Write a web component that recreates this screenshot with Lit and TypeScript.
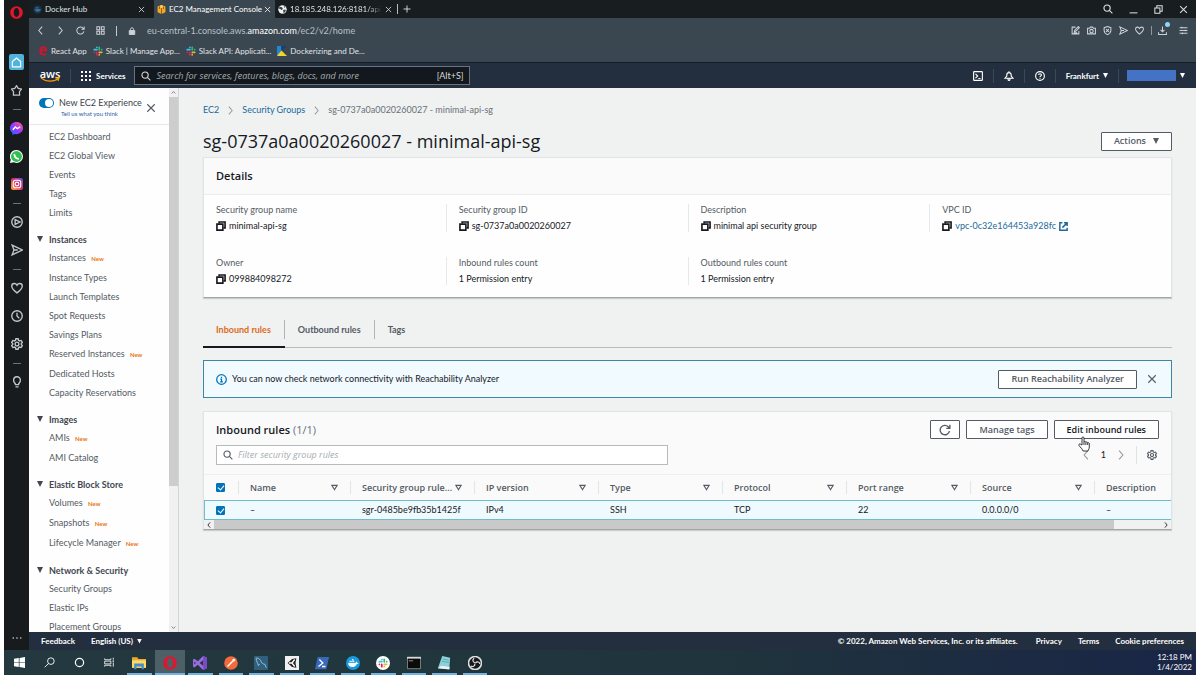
import { LitElement, html, svg, css, nothing } from "lit";
import { customElement, state } from "lit/decorators.js";

const icon = (size: number, body: unknown, cls = "") =>
  html`<svg class="ic ${cls}" width=${size} height=${size} viewBox="0 0 16 16" aria-hidden="true">${body}</svg>`;

/* Line icons, drawn on a 16 unit grid */
const I = {
  close: svg`<path d="M2 2l12 12M14 2L2 14"/>`,
  plus: svg`<path d="M8 1v14M1 8h14"/>`,
  back: svg`<path d="M11 1L5 8l6 7"/>`,
  forward: svg`<path d="M5 1l6 7-6 7"/>`,
  reload: svg`<path d="M14 9.500A6.300 6.300 0 1 1 12.300 3.600L14 5.400M14.500 1v4.800H9.700"/>`,
  grid: svg`<path d="M1.500 1.500h5v5h-5zM9.500 1.500h5v5h-5zM1.500 9.500h5v5h-5zM9.500 9.500h5v5h-5z"/>`,
  lock: svg`<path class="fill" d="M2.500 7h11v8h-11z"/><path d="M5 7V4.500a3 3 0 0 1 6 0V7"/>`,
  search: svg`<circle cx="6.500" cy="6.500" r="5"/><path d="M10.200 10.200L15 15"/>`,
  minimize: svg`<path d="M1 14h14"/>`,
  restore: svg`<path d="M1.500 5.500h9v9h-9zM5 5.500v-4h9.500V11h-4"/>`,
  edit: svg`<path d="M8 2H2v12h12V9M6 10l1-3 6-6 2 2-6 6zM5 12h6"/>`,
  camera: svg`<path d="M1 4h3.500L6 2h4l1.500 2H15v10H1z"/><circle cx="8" cy="9" r="3"/>`,
  shield: svg`<path d="M8 1l6 2v5c0 4-3 6-6 7.500C5 14 2 12 2 8V3zM5.500 5.500l5 5M10.500 5.500l-5 5"/>`,
  send: svg`<path d="M1.500 1.500L15 8 1.500 14.500 4 8zM4 8h5"/>`,
  heart: svg`<path d="M8 14.500C3 10.500 1 8.500 1 5.500 1 3.300 2.600 2 4.400 2 6 2 7.300 2.900 8 4.300 8.700 2.900 10 2 11.600 2 13.400 2 15 3.300 15 5.500c0 3-2 5-7 9z"/>`,
  download: svg`<path d="M8 1v9M4.500 7L8 10.500 11.500 7M1 11v4h14v-4"/>`,
  menu: svg`<path d="M1 3h14M1 8h14M1 13h14M5 1.500v3M11 6.500v3M6 11.500v3"/>`,
  home: svg`<path d="M8 1.500L2 6.500V14.500h12V6.500z"/>`,
  star: svg`<path d="M8 1l2.500 4 4.700 1-2.900 3.800.2 5H3.500l.2-5L.8 6l4.700-1z"/>`,
  play: svg`<circle cx="8" cy="8" r="7"/><path d="M5.500 4.800L12 8l-6.500 3.200z"/>`,
  clock: svg`<circle cx="8" cy="8" r="7"/><path d="M8 3.500V8l3 3"/>`,
  cog: svg`<path d="M6.500 1h3l.5 2 1.600.9 2-.6 1.500 2.600L13.700 7.300v1.400l1.400 1.400-1.500 2.600-2-.6-1.600.9-.5 2h-3L6 13l-1.600-.9-2 .6L.9 10.100l1.400-1.400V7.300L.9 5.900l1.500-2.600 2 .6L6 3z"/><circle cx="8" cy="8" r="2.500"/>`,
  bulb: svg`<path d="M6 11.500C6 9.500 3.500 9 3.500 5.500a4.500 4.500 0 0 1 9 0C12.500 9 10 9.500 10 11.500zM6 14.500h4"/>`,
  shell: svg`<rect x="1" y="1" width="14" height="14" rx="1"/><path d="M4 4.500L7.500 8 4 11.500M8.500 12H12"/>`,
  bell: svg`<path d="M1.500 11.500h13L11.500 8V6a3.500 3.500 0 0 0-7 0v2zM8 2.500V.5M6.500 12v1.500a1.500 1.500 0 0 0 3 0V12"/>`,
  help: svg`<circle cx="8" cy="8" r="7"/><path d="M5.800 6.500C5.800 5 6.800 4.300 8 4.300s2.300.7 2.300 2S8 7.900 8 9.500M8 10.700v1.800"/>`,
  info: svg`<circle cx="8" cy="8" r="7"/><path d="M6.300 7.300H8v4.200M6 11.500h4M8 4v1.700"/>`,
  copy: svg`<path d="M1.500 5h9.500v9.500H1.500z"/><path d="M5 4V1.500h9.500V11H12"/>`,
  external: svg`<path d="M6 1.500H1.500v13h13V10M9 1.500h5.500V7M14 2L6 10"/>`,
};

const aps = {
  windows: svg`<path fill="#fff" d="M0 2.500l7-1v6H0zM8 1.300L16 0v7.500H8zM0 8.500h7v6l-7-1zM8 8.500h8V16l-8-1.300z"/>`,
  opera: svg`<path fill="#e0162d" fill-rule="evenodd" d="M8 .2a7.800 7.800 0 1 0 0 15.600A7.800 7.800 0 0 0 8 .2zM8 2.500c2 0 3.400 2.400 3.400 5.500S10 13.500 8 13.500 4.600 11.100 4.600 8 6 2.500 8 2.500z"/>`,
  ring: svg`<circle cx="8" cy="8" r="6" fill="none" stroke="#fff" stroke-width="1.800"/>`,
  find: svg`<g fill="none" stroke="#fff" stroke-width="1.300"><circle cx="10" cy="6" r="4.800"/><path d="M6.500 9.500L1 15"/></g>`,
  tasks: svg`<g fill="none" stroke="#fff" stroke-width="1.200"><path d="M1 2v2h9V2M1 14v-2h9v2M1 6h9v4H1zM13.500 1v3M13.500 8v6"/></g><path fill="#fff" d="M12.500 5h2v2h-2z"/>`,
  folder: svg`<path fill="#e9ab2d" d="M0 1.500h6l1.500 2H16v10H0z"/><path fill="#ffd968" d="M0 5h16v8.500H0z"/><path fill="#3e8fce" d="M2.500 8.500h11V15H11v-3H5v3H2.500z"/>`,
  vs: svg`<path fill="#9b6cdf" fill-rule="evenodd" d="M11.500 0L16 2v12l-4.500 2L5.500 10 1.500 13 0 12V4l1.500-1 4 3zM11.500 4.800L7.500 8l4 3.200zM1.500 6.300v3.400L3.400 8z"/><path fill="#7a4bc4" d="M11.500 0L16 2v12l-4.500 2z"/>`,
  postman: svg`<circle cx="8" cy="8" r="7.800" fill="#f26b3a"/><path stroke="#fff" stroke-width="1.600" d="M4 12l6.500-6.500"/><circle cx="11.300" cy="4.600" r="1.600" fill="#fff"/>`,
  mysql: svg`<rect width="16" height="16" rx="1" fill="#2f617f"/><path d="M2 2.500c3-.5 5 1 6.500 4.500 1 2 2 2 4 2.500l1.500 4M2.500 3c0 3 2 5 2.500 8l1.500-2" fill="none" stroke="#b4d2e4" stroke-width=".9"/>`,
  unity: svg`<rect width="16" height="16" fill="#f1f1f1"/><path fill="#242424" d="M3 8l5-4.500 5-1-1 5.500 1 5.500-5-1z"/><path d="M8 8H4.500M8 8l3-4M8 8l3 4" stroke="#fff" stroke-width="1.500"/>`,
  ps: svg`<path fill="#3969b9" d="M3 1h13l-3 14H0z"/><path d="M5 4l4 4-5 4M8 12h4" fill="none" stroke="#fff" stroke-width="1.500"/>`,
  docker: svg`<circle cx="8" cy="8" r="8" fill="#169ce0"/><path fill="#fff" d="M2.500 8h8.300l1-2 .9 1.700 1.600.2c-.5 1-1.300 1.200-2 1.300-1 2.500-2.800 3.500-5 3.500-3 0-4.700-1.700-4.800-4.700zM4 5.500h1.500V7H4zM6 5.500h1.500V7H6zM8 5.500h1.500V7H8zM7 3.500h1.500V5H7z"/>`,
  slack: svg`<g stroke-width="2.800" stroke-linecap="round"><path stroke="#36c5f0" d="M2 5.800h4.200M6.300 2v.1"/><path stroke="#2eb67d" d="M10 2v4M13.900 5.900h.1"/><path stroke="#ecb22e" d="M10 10h4M9.900 13.900v.1"/><path stroke="#e01e5a" d="M6 10v4M2 10h.1"/></g>`,
  cmd: svg`<path fill="#0b0b0b" stroke="#a9a9a9" stroke-width=".8" d="M.5 1.500h15v13H.5z"/><path fill="#d8d8d8" d="M0 1h16v2H0z"/><path d="M2 5.500h5" stroke="#ccc" stroke-width=".8"/>`,
  notepad: svg`<path fill="#8fd0d8" d="M6 0l9 2-1 13-13-1z"/><path fill="#e7f4f2" d="M1 14l4-3 9.500 1.500L14 15.500z"/><path d="M6.500 3.500l7 1.500M5.500 6l8 1.500" stroke="#4da3b0" stroke-width=".9"/>`,
  obs: svg`<circle cx="8" cy="8" r="7.400" fill="#17191c" stroke="#e0e0e0"/><path d="M8 7.500C5 7 5 4 7 2.500M8.500 8c2-2.500 5-1 5 1M7.800 8.700c.5 3-2.500 4-4.500 2.800" fill="none" stroke="#e0e0e0" stroke-width="1.400"/>`,
  messenger: svg`<defs><linearGradient id="mg" x1="0" y1="1" x2="1" y2="0"><stop stop-color="#0a7cff"/><stop offset=".5" stop-color="#a033ff"/><stop offset="1" stop-color="#ff6780"/></linearGradient></defs><path fill="url(#mg)" d="M8 0c4.600 0 8 3.300 8 7.500S12.600 15 8 15l-2.500-.3L3 16v-2.700C1 12 0 10 0 7.500 0 3.300 3.400 0 8 0z"/><path d="M3.500 9.500l3-3.300 2.500 2 3.500-2.400" fill="none" stroke="#fff" stroke-width="1.700"/>`,
  whatsapp: svg`<path fill="#fff" d="M8 0a8 8 0 0 1 0 16l-3.500-.8L0 16l1-4A8 8 0 0 1 8 0z"/><circle cx="8" cy="8" r="6.700" fill="#31c04f"/><path d="M5.300 5c.3 3.500 2.500 5.600 5.700 6" fill="none" stroke="#fff" stroke-width="2.200"/>`,
  instagram: svg`<defs><linearGradient id="ig" x1="0" y1="1" x2="1" y2="0"><stop stop-color="#feb12f"/><stop offset=".5" stop-color="#e1306c"/><stop offset="1" stop-color="#5b51d8"/></linearGradient></defs><rect width="16" height="16" rx="3" fill="url(#ig)"/><g fill="none" stroke="#fff" stroke-width="1.500"><rect x="3" y="3" width="10" height="10" rx="3"/><circle cx="8" cy="8" r="2.500"/></g>`,
  cube: svg`<path fill="#f5a623" d="M1 3l7-3 7 3v10l-7 3-7-3z"/><path fill="#ffc95c" d="M1 3l7 2.500L15 3 8 0z"/><path d="M8 5.500V16M4.500 2v5M11.500 2v5" stroke="#9b6410"/>`,
  globe: svg`<circle cx="8" cy="8" r="7.500" fill="#f0f2f3"/><path fill="#3a4146" d="M3 3l4 1 2 3-3 2-2-2-3-1zM9 9l4-1 1 2-4 5zM10 1l3 3-2 1z"/>`,
  whale: svg`<circle cx="8" cy="8" r="7.500" fill="#17354a"/><path fill="#3c6d8d" d="M3 7h9l2 1c-1 5-10 6-11-1zM5 4h5v2H5z"/>`,
  react: svg`<path d="M13 12.500c-4 3-9.500 1-9.500-4.500s3-6 5-6 4.500 1 4.500 5H5" fill="none" stroke="#d3132c" stroke-width="3"/>`,
  kde: svg`<path fill="#1e88d2" d="M0 0h7v16H0z"/><path fill="#173e77" d="M7 8l8-8H7z"/><path fill="#f5d327" d="M0 16L7 7l9 9z"/>`,
};

type Nav = { t: string; fresh?: boolean; head?: boolean };
const n = (t: string, fresh = false): Nav => ({ t, fresh });
const h = (t: string): Nav => ({ t, head: true });
const NAV: Nav[] = [
  n("EC2 Dashboard"), n("EC2 Global View"), n("Events"), n("Tags"), n("Limits"),
  h("Instances"), n("Instances", true), n("Instance Types"), n("Launch Templates"), n("Spot Requests"),
  n("Savings Plans"), n("Reserved Instances", true), n("Dedicated Hosts"), n("Capacity Reservations"),
  h("Images"), n("AMIs", true), n("AMI Catalog"),
  h("Elastic Block Store"), n("Volumes", true), n("Snapshots", true), n("Lifecycle Manager", true),
  h("Network & Security"), n("Security Groups"), n("Elastic IPs"), n("Placement Groups"),
];

const COLS: [string, string][] = [
  ["Name", "–"], ["Security group rule...", "sgr-0485be9fb35b1425f"], ["IP version", "IPv4"], ["Type", "SSH"],
  ["Protocol", "TCP"], ["Port range", "22"], ["Source", "0.0.0.0/0"], ["Description", "–"],
];

@customElement("app-root")
export class AppRoot extends LitElement {
  @state() private selected = true;

  static styles = css`
    :host { display: flex; flex-direction: column; height: 100vh; box-sizing: border-box; padding: 0 5px 0 4px;
      background: #fff; overflow: hidden; font: 9px/12px Lato, "Open Sans", sans-serif; color: #16191f; }
    *, *::before, *::after { box-sizing: border-box; }
    button { font: inherit; color: inherit; background: none; border: 0; padding: 0; margin: 0;
      display: inline-flex; align-items: center; justify-content: center; }
    input { font: inherit; color: inherit; margin: 0; }
    a { color: inherit; text-decoration: none; }
    h1, h2, p, dl, dd, dt, ul { margin: 0; padding: 0; font-weight: 400; }
    .ic { display: block; flex: none; fill: none; stroke: currentColor; stroke-width: 1.8; }
    .ic .fill { fill: currentColor; }
    .art { stroke: none; }
    .bold { stroke-width: 2.6; }
    .down { width: 6px; height: 6px; background: currentColor; clip-path: polygon(0 0, 100% 0, 50% 100%); flex: none; }
    .desk { flex: 1; min-height: 0; display: flex; }

    .rail { width: 25px; flex: none; background: #171b1e; color: #c3c7ca; display: flex; flex-direction: column; align-items: center; }
    .rail button { width: 25px; height: 28px; flex: none; }
    .rail .brand { height: 24px; margin-bottom: 24px; }
    .rail .on { width: 15px; height: 16px; margin: 6px 0; background: #4fb3dc; color: #fff; border-radius: 2px; }
    .rail hr { width: 8px; height: 1px; border: 0; margin: 5px 0 4px; background: #6c7276; flex: none; }
    .rail .more { margin-top: auto; height: 24px; }
    .browser { flex: 1; min-width: 0; display: flex; flex-direction: column; }

    .tabs { height: 18px; flex: none; background: #181d20; color: #dfe2e4; display: flex; align-items: center; font: 8px/12px Lato, sans-serif; }
    .tab { height: 18px; display: flex; align-items: center; gap: 3px; padding: 0 4px 0 3px; white-space: nowrap; width: 121px; }
    .tab.wide { width: 125px; padding: 0 9px 0 4px; }
    .tab .name { flex: 1; min-width: 0; text-align: left; }
    .tab.active { background: #3a4650; color: #fff; }
    .tab .fade { mask-image: linear-gradient(90deg, #000 85%, transparent); }
    .add { border-left: 1px solid #b8bcbf; padding-left: 5px; margin-left: 1px; height: 10px; }
    .win { margin-left: auto; display: flex; gap: 16px; padding-right: 8px; }
    .bar { background: #3a4650; color: #cdd2d6; flex: none; }
    .addr { height: 25px; display: flex; align-items: center; padding: 0 8px 0 7px; gap: 11px; }
    .addr .sep { width: 1px; height: 10px; background: #c3c9cd; }
    .url { color: #b9c1c7; white-space: nowrap; }
    .url b { font-weight: 400; color: #fff; }
    .tools { margin-left: auto; display: flex; gap: 7px; align-items: center; }
    .tools .dl { position: relative; margin: 0 5px 0 0; padding-left: 6px; border-left: 1px solid #8e979d; }
    .tools .dl::after { content: ""; position: absolute; right: -3px; top: -4px; width: 5px; height: 5px; border-radius: 50%; background: #8fd4f5; }
    .marks { height: 19px; display: flex; align-items: flex-start; gap: 6px; padding: 2px 0 0 9px; font: 8px/12px Lato, sans-serif; color: #e1e4e6; }
    .marks a { display: flex; align-items: center; gap: 3px; white-space: nowrap; }

    .aws { height: 26px; flex: none; background: #232f3e; color: #fff; border-top: 1px solid #161d26; display: flex; align-items: center; padding: 0 11px; }
    .logo { display: flex; flex-direction: column; align-items: center; width: 20px; font: 600 11px/9px "Open Sans", sans-serif; }
    .logo svg { display: block; margin-top: -1px; }
    .services { gap: 5px; margin-left: 10px; padding-left: 10px; border-left: 1px solid #3d4856; height: 14px; font: 700 8px/12px Lato, sans-serif; }
    .find { margin-left: 9px; width: 336px; height: 19px; background: #12181d; border: 1px solid #66727d; display: flex; align-items: center; gap: 5px; padding: 0 6px; color: #d5dbdb; }
    .find input, .filter input { flex: 1; min-width: 0; border: 0; background: none; padding: 0; outline: 0; }
    .find input::placeholder, .filter input::placeholder { color: #a5adb0; font-style: italic; opacity: 1; }
    .find input, .filter input { font-family: "Open Sans", sans-serif; }
    .acct { margin-left: auto; display: flex; align-items: center; height: 14px; }
    .acct button { height: 14px; padding: 0 10px; border-left: 1px solid #3d4856; gap: 4px; font: 700 8px/12px Lato, sans-serif; }
    .acct button:first-child { border: 0; }
    .acct .user { padding: 0 0 0 8px; }
    .acct .user i { width: 49px; height: 11px; background: #4472c4; }
    .acct .down, .foot .down { width: 5px; height: 5px; }

    .page { flex: 1; min-height: 0; display: flex; background: #f0f2f2; }
    .side { width: 140px; flex: none; background: #fefefe; color: #545b64; overflow: hidden; }
    .exp { height: 37px; border-bottom: 1px solid #e6e8e8; display: flex; padding: 9px 0 0 10px; gap: 5px; align-items: flex-start; }
    .exp .sw { appearance: none; width: 15px; height: 10px; margin-top: 1px; border-radius: 5px; background: #0073bb; padding: 1px; flex: none; }
    .exp .sw::before { content: ""; display: block; width: 8px; height: 8px; border-radius: 50%; background: #fff; margin-left: auto; }
    .exp .txt { width: 82px; white-space: nowrap; color: #3c434b; display: flex; flex-direction: column; }
    .exp .txt a { font-size: 6px; line-height: 9px; color: #2e62a8; padding-left: 2px; }
    .exp button { margin-top: 6px; }
    .side ul { list-style: none; padding-top: 2px; }
    .side li { height: 19px; line-height: 19px; padding-left: 20px; white-space: nowrap; }
    .side li.fresh { height: 20px; line-height: 20px; }
    .side li .new { font-size: 6px; font-weight: 700; color: #ec7211; margin-left: 3px; }
    .side li.head { margin-top: 7px; padding-left: 8px; font-weight: 700; color: #414750; }
    .side li.head button { gap: 6px; line-height: 19px; }
    .vbar { width: 10px; flex: none; background: #f1f1f1; border-right: 1px solid #d5d5d5; display: flex; flex-direction: column; align-items: center; justify-content: space-between; color: #666; padding: 2px 0; }
    .vbar i { flex: 1; width: 9px; margin: 2px 0; background: linear-gradient(#cdcdcd 74%, transparent 74%); }

    main { flex: 1; min-width: 0; padding: 16px 24px 0; display: flex; flex-direction: column; }
    .crumbs { display: flex; align-items: center; gap: 7px; height: 12px; color: #687078; }
    .crumbs a, .link { color: #21699a; }
    .crumbs .ic { color: #959ca1; }
    .title { display: flex; justify-content: space-between; align-items: center; margin-top: 13px; height: 24px; }
    h1 { font: 18px/24px "Open Sans", sans-serif; }
    .btn { height: 19px; border: 1px solid #545b64; border-radius: 1px; background: #fff; padding: 0 12px; color: #545b64; font: 600 9px/12px "Open Sans", sans-serif; white-space: nowrap; }
    .btn.strong { color: #16191f; }
    .btn.square { padding: 0 8px; }
    .btn .down { margin-left: 7px; }
    .card { background: #fefefe; border: 1px solid #e1e4e4; border-bottom-color: #a0a6a6; box-shadow: 0 1px 1px #c9cdcd; }
    .details { margin-top: 4px; }
    h2 { font: 600 11px/16px "Open Sans", sans-serif; }
    .details h2 { background: #fafafa; border-bottom: 1px solid #eaeded; padding: 10px 12px; }
    dl { display: grid; grid-template-columns: repeat(4, 1fr); row-gap: 25px; padding: 9px 0 12px; }
    dl div { padding-left: 12px; border-left: 1px solid #e6e9e9; height: 28px; }
    dl div:nth-child(4n + 1) { border-color: transparent; padding-left: 11px; }
    dt { color: #545b64; }
    dd { display: flex; align-items: center; gap: 3px; margin-top: 4px; height: 12px; white-space: nowrap; }
    dd a { display: flex; align-items: center; gap: 3px; }
    .subtabs { display: flex; margin-top: 13px; height: 37px; border-bottom: 1px solid #b6bbbb; font-weight: 700; color: #545b64; }
    .subtabs button { padding: 0 14px 0 13px; height: 37px; position: relative; }
    .subtabs button:not(:last-child)::after { content: ""; position: absolute; right: 0; top: 9px; height: 19px; width: 1px; background: #b0b5b8; }
    .subtabs .cur { color: #dd6b20; border-bottom: 2px solid #16191f; border-top: 2px solid transparent; }
    .subtabs .cur::after { margin-top: -2px; }
    .alert { margin-top: 12px; height: 38px; background: #f1faff; border: 1px solid #3c87a3; display: flex; align-items: center; padding: 0 14px 0 12px; gap: 5px; }
    .alert .ic { color: #0073bb; }
    .alert .btn { margin-left: auto; margin-right: 5px; }
    .alert .x .ic { color: #545b64; }
    .rules { margin-top: 13px; background: #fafafa; }
    .top { display: flex; align-items: center; gap: 6px; padding: 8px 12px 6px; }
    .top h2 { margin-right: auto; }
    .top h2 span { font-weight: 400; color: #687078; }
    .row2 { display: flex; align-items: center; padding: 0 14px 9px 12px; }
    .filter { flex: 0 1 452px; height: 20px; background: #fff; border: 1px solid #b5bcbe; display: flex; align-items: center; gap: 5px; padding: 0 6px; color: #545b64; }
    .pager { margin-left: auto; display: flex; align-items: center; gap: 10px; color: #959ca1; height: 18px; }
    .pager b { color: #16191f; font-weight: 400; }
    .pager .gear { color: #545b64; border-left: 1px solid #dfe3e3; padding-left: 10px; height: 18px; }
    .scroll { overflow: hidden; }
    table { border-collapse: separate; border-spacing: 0; table-layout: fixed; width: 1060px; }
    .c0 { width: 34px; } .c1 { width: 112px; } .c2 { width: 124px; }
    th { height: 26px; border-top: 1px solid #eef0f0; padding: 0; text-align: left; font: 600 9px/12px "Open Sans", sans-serif; color: #545b64; white-space: nowrap; }
    th > div { display: flex; align-items: center; justify-content: space-between; height: 13px; padding: 0 12px 0 11px; border-left: 1px solid #e1e5e5; }
    td { height: 20px; background: #effafe; border: solid #6fbccb; border-width: 1px 0; padding: 0 0 0 12px; white-space: nowrap; }
    th:first-child { padding-left: 12px; }
    td:first-child { border-left-width: 1px; padding-left: 11px; }
    .ck { appearance: none; display: block; width: 9px; height: 9px; border: 1px solid #0073bb; border-radius: 1px; background: #fff; }
    .ck:checked { background: #0073bb; }
    .ck:checked::before { content: ""; display: block; width: 4px; height: 6px; margin: 0 auto; border: solid #fff; border-width: 0 1px 1px 0; transform: rotate(40deg); }
    .hbar { height: 9px; background: #f1f1f1; display: flex; align-items: center; gap: 1px; padding: 0 2px; color: #333; }
    .hbar i { flex: 1; height: 9px; margin: 0 1px; background: linear-gradient(90deg, #c9c9c9 95%, transparent 95%); }
    .hand { position: absolute; left: 1078px; top: 436px; z-index: 2; }

    .foot { height: 18px; flex: none; background: #232f3e; color: #fff; display: flex; align-items: center; padding: 0 12px; gap: 16px; font: 700 8px/12px Lato, sans-serif; white-space: nowrap; }
    .foot button { gap: 4px; }
    .foot .copyr { margin-left: auto; margin-right: 2px; }
    .task { height: 25px; flex: none; background: linear-gradient(90deg, #23393f, #1f343c 60%, #1a2547); display: flex; font: 8px/10px Lato, sans-serif; color: #fff; }
    .task button { height: 25px; width: 30px; flex: none; }
    .apps { display: flex; flex: 0 1 366px; }
    .apps button { flex: 1; position: relative; }
    .apps button::after { content: ""; position: absolute; bottom: 0; left: 3px; right: 3px; height: 2px; background: #6fb4e3; }
    .apps .act { background: #4e6067; }
    .apps .act::after { left: 0; right: 0; }
    .clock { margin-left: auto; text-align: right; padding: 2px 4px 0 0; }
    .slackbg { background: #fff; border-radius: 50%; padding: 2px; }
  `;

  private chrome() {
    return html`
      <div class="tabs">
        <button class="tab wide">${icon(9, aps.whale, "art")}<span class="name">Docker Hub</span>${icon(7, I.close)}</button>
        <button class="tab active">${icon(9, aps.cube, "art")}<span class="name">EC2 Management Console</span>${icon(7, I.close)}</button>
        <button class="tab">${icon(9, aps.globe, "art")}<span class="name fade">18.185.248.126:8181/api/g</span>${icon(7, I.close)}</button>
        <button class="add" aria-label="New tab">${icon(8, I.plus)}</button>
        <div class="win">
          <button aria-label="Search tabs">${icon(10, I.search)}</button><button aria-label="Minimize">${icon(9, I.minimize)}</button>
          <button aria-label="Restore">${icon(9, I.restore)}</button><button aria-label="Close">${icon(9, I.close)}</button>
        </div>
      </div>
      <div class="bar">
        <div class="addr">
          <button aria-label="Back">${icon(9, I.back)}</button><button aria-label="Forward">${icon(9, I.forward)}</button>
          <button aria-label="Reload">${icon(9, I.reload)}</button><button aria-label="Speed dial">${icon(9, I.grid)}</button>
          <span class="sep"></span>${icon(8, I.lock)}
          <span class="url">eu-central-1.console.aws.<b>amazon.com</b>/ec2/v2/home</span>
          <div class="tools">
            ${[I.edit, I.camera, I.shield, I.send, I.heart].map((i) => html`<button>${icon(9, i)}</button>`)}
            <button class="dl" aria-label="Downloads">${icon(9, I.download)}</button><button aria-label="Menu">${icon(9, I.menu)}</button>
          </div>
        </div>
        <nav class="marks">
          <a href="#">${icon(10, aps.react, "art")}React App</a>
          <a href="#">${icon(10, aps.slack, "art")}Slack | Manage App...</a>
          <a href="#">${icon(10, aps.slack, "art")}Slack API: Applicati...</a>
          <a href="#">${icon(10, aps.kde, "art")}Dockerizing and De...</a>
        </nav>
      </div>`;
  }

  private awsBar() {
    return html`<header class="aws">
      <a class="logo" href="#">aws<svg width="20" height="6" viewBox="0 0 20 6" fill="none" stroke="#f90" stroke-width="1.200"><path d="M1 1c5 4 12 4 17 1M15.500 1.200l3.500-.4-1 3.200"/></svg></a>
      <button class="services"><svg width="10" height="10" viewBox="0 0 10 10" fill="#fff">${[0, 4, 8].map((x) => [0, 4, 8].map((y) => svg`<rect x=${x} y=${y} width="2" height="2"/>`))}</svg>Services</button>
      <label class="find">${icon(10, I.search)}<input type="search" aria-label="Search" placeholder="Search for services, features, blogs, docs, and more" /><span>[Alt+S]</span></label>
      <div class="acct">
        <button aria-label="CloudShell">${icon(10, I.shell)}</button><button aria-label="Notifications">${icon(10, I.bell)}</button>
        <button aria-label="Help">${icon(10, I.help)}</button><button>Frankfurt<span class="down"></span></button>
        <button class="user" aria-label="Account"><i></i><span class="down"></span></button>
      </div>
    </header>`;
  }

  private side() {
    return html`<nav class="side">
        <div class="exp">
          <input class="sw" type="checkbox" id="exp" checked />
          <div class="txt"><label for="exp">New EC2 Experience</label><a href="#">Tell us what you think</a></div>
          <button aria-label="Close">${icon(10, I.close)}</button>
        </div>
        <ul>${NAV.map((i) => i.head
          ? html`<li class="head"><button><span class="down"></span>${i.t}</button></li>`
          : html`<li class=${i.fresh ? "fresh" : ""}><a href="#">${i.t}</a>${i.fresh ? html` <span class="new">New</span>` : nothing}</li>`)}</ul>
      </nav>
      <div class="vbar">${icon(5, svg`<path d="M2 11l6-6 6 6"/>`, "bold")}<i></i>${icon(5, svg`<path d="M2 5l6 6 6-6"/>`, "bold")}</div>`;
  }

  private details() {
    const c = icon(10, I.copy, "bold");
    return html`<section class="card details">
      <h2>Details</h2>
      <dl>
        <div><dt>Security group name</dt><dd>${c}minimal-api-sg</dd></div>
        <div><dt>Security group ID</dt><dd>${c}sg-0737a0a0020260027</dd></div>
        <div><dt>Description</dt><dd>${c}minimal api security group</dd></div>
        <div><dt>VPC ID</dt><dd>${c}<a class="link" href="#">vpc-0c32e164453a928fc${icon(9, I.external, "bold")}</a></dd></div>
        <div><dt>Owner</dt><dd>${c}099884098272</dd></div>
        <div><dt>Inbound rules count</dt><dd>1 Permission entry</dd></div>
        <div><dt>Outbound rules count</dt><dd>1 Permission entry</dd></div>
      </dl>
    </section>`;
  }

  private rules() {
    const toggle = () => (this.selected = !this.selected);
    return html`<section class="card rules">
      <div class="top">
        <h2>Inbound rules <span>(1/1)</span></h2>
        <button class="btn square" aria-label="Refresh">${icon(12, I.reload)}</button>
        <button class="btn">Manage tags</button><button class="btn strong">Edit inbound rules</button>
      </div>
      <div class="row2">
        <label class="filter">${icon(10, I.search)}<input aria-label="Filter" placeholder="Filter security group rules" /></label>
        <div class="pager"><button aria-label="Previous">${icon(10, I.back)}</button><b>1</b><button aria-label="Next">${icon(10, I.forward)}</button>
          <button class="gear" aria-label="Preferences">${icon(10, I.cog)}</button></div>
      </div>
      <div class="scroll"><table>
        <colgroup><col class="c0" /><col class="c1" />${[1, 2, 3, 4, 5, 6].map(() => html`<col class="c2" />`)}<col /></colgroup>
        <thead><tr><th><input class="ck" type="checkbox" aria-label="Select all" .checked=${this.selected} @change=${toggle} /></th>
          ${COLS.map(([t]) => html`<th><div>${t}${t === "Description" ? nothing : icon(7, svg`<path d="M2 3h12L8 13z"/>`, "bold")}</div></th>`)}</tr></thead>
        <tbody><tr><td><input class="ck" type="checkbox" aria-label="Select rule" .checked=${this.selected} @change=${toggle} /></td>
          ${COLS.map(([, v]) => html`<td>${v}</td>`)}</tr></tbody>
      </table></div>
      <div class="hbar">${icon(6, I.back, "bold")}<i></i>${icon(6, I.forward, "bold")}</div>
    </section>`;
  }

  render() {
    return html`
      <div class="desk">
        <nav class="rail">
          <button class="brand" aria-label="Opera">${icon(13, aps.opera, "art")}</button>
          <button class="on" aria-label="Home">${icon(11, I.home)}</button>
          <button>${icon(11, I.star)}</button><hr />
          <button>${icon(13, aps.messenger, "art")}</button><button>${icon(13, aps.whatsapp, "art")}</button><button>${icon(12, aps.instagram, "art")}</button><hr />
          <button>${icon(12, I.play)}</button><button>${icon(12, I.send)}</button><hr />
          <button>${icon(12, I.heart)}</button><button>${icon(12, I.clock)}</button><button>${icon(12, I.cog)}</button><hr />
          <button>${icon(12, I.bulb)}</button>
          <button class="more" aria-label="More">${icon(10, svg`<path d="M1 8h2M7 8h2M13 8h2"/>`, "bold")}</button>
        </nav>
        <div class="browser">
          ${this.chrome()}${this.awsBar()}
          <div class="page">
            ${this.side()}
            <main>
              <nav class="crumbs"><a href="#">EC2</a>${icon(9, I.forward)}<a href="#">Security Groups</a>${icon(9, I.forward)}<span>sg-0737a0a0020260027 - minimal-api-sg</span></nav>
              <div class="title"><h1>sg-0737a0a0020260027 - minimal-api-sg</h1><button class="btn">Actions<span class="down"></span></button></div>
              ${this.details()}
              <div class="subtabs"><button class="cur">Inbound rules</button><button>Outbound rules</button><button>Tags</button></div>
              <div class="alert">${icon(11, I.info)}<p>You can now check network connectivity with Reachability Analyzer</p>
                <button class="btn">Run Reachability Analyzer</button><button class="x" aria-label="Dismiss">${icon(10, I.close)}</button></div>
              ${this.rules()}
            </main>
          </div>
          <footer class="foot"><a href="#">Feedback</a><button>English (US)<span class="down"></span></button>
            <span class="copyr">© 2022, Amazon Web Services, Inc. or its affiliates.</span><a href="#">Privacy</a><a href="#">Terms</a><a href="#">Cookie preferences</a></footer>
        </div>
      </div>
      <div class="task">
        ${[aps.windows, aps.find, aps.ring, aps.tasks].map((a) => html`<button>${icon(11, a, "art")}</button>`)}
        <div class="apps">
          ${[aps.folder, aps.opera, aps.vs, aps.postman, aps.mysql, aps.unity, aps.ps, aps.docker, aps.slack, aps.cmd, aps.notepad, aps.obs].map(
            (a, i) => html`<button class=${i === 1 ? "act" : ""}>${icon(14, a, i === 8 ? "art slackbg" : "art")}</button>`)}
        </div>
        <div class="clock">12:18 PM<br />1/4/2022</div>
      </div>
      <svg class="hand" width="12" height="16" viewBox="0 0 12 16" aria-hidden="true"><path fill="#fff" stroke="#222" stroke-width=".9" d="M4 9V2c0-1.500 2-1.500 2 0v4c.5-.8 1.800-.6 1.900.3.600-.6 1.700-.3 1.800.5.700-.4 1.600 0 1.600.9V11c0 2-1 2.500-1.300 4H5C4.500 13 2.500 11.500 1 9.500.3 8.500 1.600 7.500 2.500 8.200zM6 6v3M7.900 6.500V9M9.700 7v2"/></svg>`;
  }
}
